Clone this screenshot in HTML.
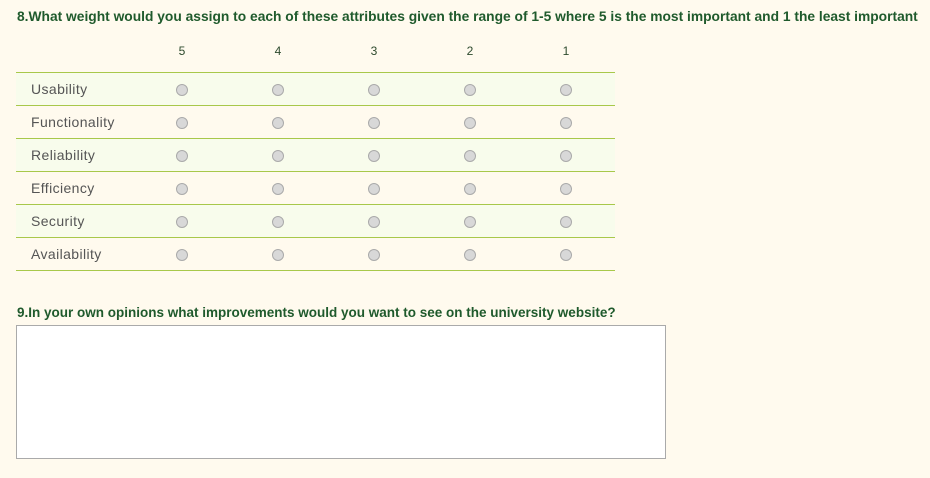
<!DOCTYPE html>
<html><head><style>
body{margin:0;background:#fffaee;font-family:"Liberation Sans",sans-serif;width:930px;height:478px;overflow:hidden;position:relative}
.h{position:absolute;left:17px;font-weight:bold;font-size:13.8px;color:#1f5a2c;white-space:nowrap;letter-spacing:0px}
.num{position:absolute;top:44px;font-size:12px;color:#2d4a2d;width:20px;text-align:center}
.row{position:absolute;left:16px;width:599px;height:32px;border-bottom:1px solid #a8c84a}
.row span{position:absolute;left:15px;top:8px;font-size:14px;letter-spacing:0.4px;color:#555}
.r{position:absolute;top:11px;width:10px;height:10px;border-radius:50%;background:#d8d8d8;border:1px solid #aaa}
.ta{position:absolute;left:16px;top:325px;width:648px;height:132px;background:#fff;border:1px solid #aaa}
</style></head><body>
<div class="h" style="top:9px">8.What weight would you assign to each of these attributes given the range of 1-5 where 5 is the most important and 1 the least important</div>
<div class="num" style="left:172px">5</div><div class="num" style="left:268px">4</div><div class="num" style="left:364px">3</div><div class="num" style="left:460px">2</div><div class="num" style="left:556px">1</div>
<div style="position:absolute;left:16px;top:72px;width:599px;border-top:1px solid #a8c84a"></div>
<div class="row" style="top:73px;background:#f8fcec"><span>Usability</span><i class="r" style="left:160px"></i><i class="r" style="left:256px"></i><i class="r" style="left:352px"></i><i class="r" style="left:448px"></i><i class="r" style="left:544px"></i></div>
<div class="row" style="top:106px"><span>Functionality</span><i class="r" style="left:160px"></i><i class="r" style="left:256px"></i><i class="r" style="left:352px"></i><i class="r" style="left:448px"></i><i class="r" style="left:544px"></i></div>
<div class="row" style="top:139px;background:#f8fcec"><span>Reliability</span><i class="r" style="left:160px"></i><i class="r" style="left:256px"></i><i class="r" style="left:352px"></i><i class="r" style="left:448px"></i><i class="r" style="left:544px"></i></div>
<div class="row" style="top:172px"><span>Efficiency</span><i class="r" style="left:160px"></i><i class="r" style="left:256px"></i><i class="r" style="left:352px"></i><i class="r" style="left:448px"></i><i class="r" style="left:544px"></i></div>
<div class="row" style="top:205px;background:#f8fcec"><span>Security</span><i class="r" style="left:160px"></i><i class="r" style="left:256px"></i><i class="r" style="left:352px"></i><i class="r" style="left:448px"></i><i class="r" style="left:544px"></i></div>
<div class="row" style="top:238px"><span>Availability</span><i class="r" style="left:160px"></i><i class="r" style="left:256px"></i><i class="r" style="left:352px"></i><i class="r" style="left:448px"></i><i class="r" style="left:544px"></i></div>
<div class="h" style="top:305px;font-size:13.5px">9.In your own opinions what improvements would you want to see on the university website?</div>
<div class="ta"></div>
</body></html>
